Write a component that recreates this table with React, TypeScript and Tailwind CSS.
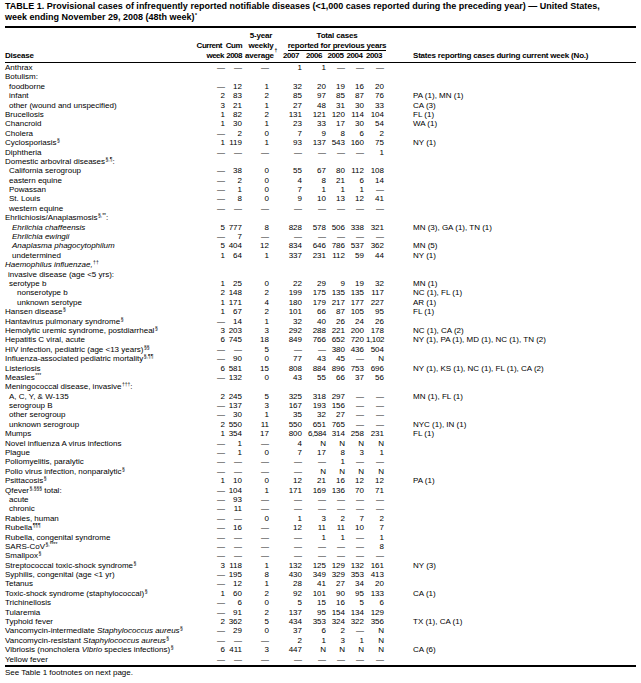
import React from "react";

type Row = { n: React.ReactNode; i?: number; v?: string; s?: string };

function Sup({ c }: { c: string }) {
  return <span className="relative -top-[3px] ml-[0.5px] text-[5px] leading-none">{c}</span>;
}

const DASH8 = "- - - - - - - -";

const rows: Row[] = [
  { n: "Anthrax", v: "- - - 1 1 - - -" },
  { n: "Botulism:" },
  { n: "foodborne", i: 4, v: "- 12 1 32 20 19 16 20" },
  { n: "infant", i: 4, v: "2 83 2 85 97 85 87 76", s: "PA (1), MN (1)" },
  { n: "other (wound and unspecified)", i: 4, v: "3 21 1 27 48 31 30 33", s: "CA (3)" },
  { n: "Brucellosis", v: "1 82 2 131 121 120 114 104", s: "FL (1)" },
  { n: "Chancroid", v: "1 30 1 23 33 17 30 54", s: "WA (1)" },
  { n: "Cholera", v: "- 2 0 7 9 8 6 2" },
  { n: <>Cyclosporiasis<Sup c="§" /></>, v: "1 119 1 93 137 543 160 75", s: "NY (1)" },
  { n: "Diphtheria", v: "- - - - - - - 1" },
  { n: <>Domestic arboviral diseases<Sup c="§,¶" />:</> },
  { n: "California serogroup", i: 4, v: "- 38 0 55 67 80 112 108" },
  { n: "eastern equine", i: 4, v: "- 2 0 4 8 21 6 14" },
  { n: "Powassan", i: 4, v: "- 1 0 7 1 1 1 -" },
  { n: "St. Louis", i: 4, v: "- 8 0 9 10 13 12 41" },
  { n: "western equine", i: 4, v: DASH8 },
  { n: <>Ehrlichiosis/Anaplasmosis<Sup c="§,**" />:</> },
  { n: <em>Ehrlichia chaffeensis</em>, i: 7, v: "5 777 8 828 578 506 338 321", s: "MN (3), GA (1), TN (1)" },
  { n: <em>Ehrlichia ewingii</em>, i: 7, v: "- 7 - - - - - -" },
  { n: <em>Anaplasma phagocytophilum</em>, i: 7, v: "5 404 12 834 646 786 537 362", s: "MN (5)" },
  { n: "undetermined", i: 7, v: "1 64 1 337 231 112 59 44", s: "NY (1)" },
  { n: <><em>Haemophilus influenzae,</em><Sup c="††" /></> },
  { n: "invasive disease (age <5 yrs):", i: 3 },
  { n: "serotype b", i: 4, v: "1 25 0 22 29 9 19 32", s: "MN (1)" },
  { n: "nonserotype b", i: 12, v: "2 148 2 199 175 135 135 117", s: "NC (1), FL (1)" },
  { n: "unknown serotype", i: 12, v: "1 171 4 180 179 217 177 227", s: "AR (1)" },
  { n: <>Hansen disease<Sup c="§" /></>, v: "1 67 2 101 66 87 105 95", s: "FL (1)" },
  { n: <>Hantavirus pulmonary syndrome<Sup c="§" /></>, v: "- 14 1 32 40 26 24 26" },
  { n: <>Hemolytic uremic syndrome, postdiarrheal<Sup c="§" /></>, v: "3 203 3 292 288 221 200 178", s: "NC (1), CA (2)" },
  { n: "Hepatitis C viral, acute", v: "6 745 18 849 766 652 720 1,102", s: "NY (1), PA (1), MD (1), NC (1), TN (2)" },
  { n: <>HIV infection, pediatric (age &lt;13 years)<Sup c="§§" /></>, v: "- - 5 - - 380 436 504" },
  { n: <>Influenza-associated pediatric mortality<Sup c="§,¶¶" /></>, v: "- 90 0 77 43 45 - N" },
  { n: "Listeriosis", v: "6 581 15 808 884 896 753 696", s: "NY (1), KS (1), NC (1), FL (1), CA (2)" },
  { n: <>Measles<Sup c="***" /></>, v: "- 132 0 43 55 66 37 56" },
  { n: <>Meningococcal disease, invasive<Sup c="†††" />:</> },
  { n: "A, C, Y, & W-135", i: 4, v: "2 245 5 325 318 297 - -", s: "MN (1), FL (1)" },
  { n: "serogroup B", i: 4, v: "- 137 3 167 193 156 - -" },
  { n: "other serogroup", i: 4, v: "- 30 1 35 32 27 - -" },
  { n: "unknown serogroup", i: 4, v: "2 550 11 550 651 765 - -", s: "NYC (1), IN (1)" },
  { n: "Mumps", v: "1 354 17 800 6,584 314 258 231", s: "FL (1)" },
  { n: "Novel influenza A virus infections", v: "- 1 - 4 N N N N" },
  { n: "Plague", v: "- 1 0 7 17 8 3 1" },
  { n: "Poliomyelitis, paralytic", v: "- - - - - 1 - -" },
  { n: <>Polio virus infection, nonparalytic<Sup c="§" /></>, v: "- - - - N N N N" },
  { n: <>Psittacosis<Sup c="§" /></>, v: "1 10 0 12 21 16 12 12", s: "PA (1)" },
  { n: <>Qfever<Sup c="§,§§§" /> total:</>, v: "- 104 1 171 169 136 70 71" },
  { n: "acute", i: 4, v: "- 93 - - - - - -" },
  { n: "chronic", i: 4, v: "- 11 - - - - - -" },
  { n: "Rabies, human", v: "- - 0 1 3 2 7 2" },
  { n: <>Rubella<Sup c="¶¶¶" /></>, v: "- 16 - 12 11 11 10 7" },
  { n: "Rubella, congenital syndrome", v: "- - - - 1 1 - 1" },
  { n: <>SARS-CoV<Sup c="§,****" /></>, v: "- - - - - - - 8" },
  { n: <>Smallpox<Sup c="§" /></>, v: DASH8 },
  { n: <>Streptococcal toxic-shock syndrome<Sup c="§" /></>, v: "3 118 1 132 125 129 132 161", s: "NY (3)" },
  { n: "Syphilis, congenital (age <1 yr)", v: "- 195 8 430 349 329 353 413" },
  { n: "Tetanus", v: "- 12 1 28 41 27 34 20" },
  { n: <>Toxic-shock syndrome (staphylococcal)<Sup c="§" /></>, v: "1 60 2 92 101 90 95 133", s: "CA (1)" },
  { n: "Trichinellosis", v: "- 6 0 5 15 16 5 6" },
  { n: "Tularemia", v: "- 91 2 137 95 154 134 129" },
  { n: "Typhoid fever", v: "2 362 5 434 353 324 322 356", s: "TX (1), CA (1)" },
  { n: <>Vancomycin-intermediate <em>Staphylococcus aureus</em><Sup c="§" /></>, v: "- 29 0 37 6 2 - N" },
  { n: <>Vancomycin-resistant <em>Staphylococcus aureus</em><Sup c="§" /></>, v: "- - - 2 1 3 1 N" },
  { n: <>Vibriosis (noncholera <em>Vibrio</em> species infections)<Sup c="§" /></>, v: "6 411 3 447 N N N N", s: "CA (6)" },
  { n: "Yellow fever", v: DASH8 },
];

// disease | week | cum | avg | 2007 | 2006 | 2005 | 2004 | 2003 | gap | states
const GRID = "grid grid-cols-[195px_25px_17px_38px_22px_24px_19px_19px_20px_29px_1fr]";

function DataRow({ r }: { r: Row }) {
  const vals = r.v ? r.v.split(" ").map((x) => (x === "-" ? "—" : x)) : [];
  return (
    <div className={`${GRID} h-[9.4px] leading-[9.4px]`}>
      <div className="whitespace-nowrap" style={{ paddingLeft: r.i ?? 0 }}>
        {r.n}
      </div>
      {vals.map((x, k) => (
        <div
          key={k}
          className={`flex justify-end whitespace-nowrap ${k === 2 ? "pr-[11px]" : ""} ${
            x.includes(",") ? "tracking-[-0.4px]" : ""
          }`}
        >
          {x}
        </div>
      ))}
      {vals.length > 0 && <div />}
      {r.s && <div className="whitespace-nowrap">{r.s}</div>}
    </div>
  );
}

export default function App() {
  return (
    <div className="w-[641px] h-[683px] bg-white text-black px-[5px] pt-[1px] font-['Liberation_Sans',Arial,sans-serif]">
      <div className="text-[9px] font-bold leading-[11px] whitespace-nowrap">
        <div>
          TABLE 1. Provisional cases of infrequently reported notifiable diseases (&lt;1,000 cases reported during the
          preceding year) — United States,
        </div>
        <div>
          week ending November 29, 2008 (48th week)<Sup c="*" />
        </div>
      </div>
      <div className="mt-[3px] border-t-[2px] border-black" />

      <div
        className={`${GRID} grid-rows-[10px_10px_10px] pt-[3px] pb-[1px] text-[8px] leading-[10px] font-bold tracking-[-0.2px]`}
      >
        <div className="col-start-1 row-start-3">Disease</div>
        <div className="col-start-2 row-start-2 flex justify-end whitespace-nowrap pr-[3px] tracking-[-0.5px]">Current</div>
        <div className="col-start-2 row-start-3 flex justify-end pr-[1px] tracking-[-0.5px]">week</div>
        <div className="col-start-3 row-start-2 flex justify-end tracking-[-0.5px]">Cum</div>
        <div className="col-start-3 row-start-3 flex justify-end tracking-[-0.5px]">2008</div>
        <div className="col-start-4 row-start-1 flex justify-center">5-year</div>
        <div className="col-start-4 row-start-2 flex justify-center">weekly</div>
        <div className="col-start-4 row-start-3 flex justify-center whitespace-nowrap">
          average<Sup c="†" />
        </div>
        <div className="col-start-5 col-span-5 row-start-1 flex justify-center pl-[10px]">Total cases</div>
        <div className="col-start-5 col-span-5 row-start-2 flex justify-center pl-[10px]">
          <span className="border-b border-black leading-[9px] whitespace-nowrap">reported for previous years</span>
        </div>
        {["2007", "2006", "2005", "2004", "2003"].map((y, k) => (
          <div key={y} className={`row-start-3 flex justify-center tracking-[-0.5px] ${k === 0 ? "col-start-5" : ""}`}>
            {y}
          </div>
        ))}
        <div className="col-start-11 row-start-3 whitespace-nowrap">States reporting cases during current week (No.)</div>
      </div>
      <div className="border-t border-black" />

      <div className="text-[8px]">
        {rows.map((r, k) => (
          <DataRow key={k} r={r} />
        ))}
      </div>
      <div className="mt-[1px] border-t-[2px] border-black" />
      <div className="mt-[1px] text-[8px] leading-[10px]">See Table 1 footnotes on next page.</div>
    </div>
  );
}
